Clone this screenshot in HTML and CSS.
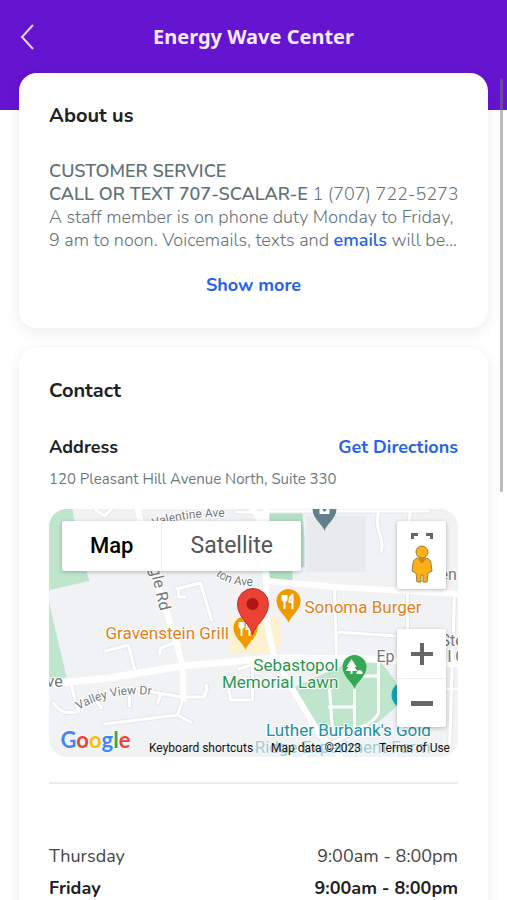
FILE: index.html
```
<!DOCTYPE html>
<html lang="en">
<head>
    <meta charset="UTF-8">
    <meta name="viewport" content="width=device-width, initial-scale=1.0">
    <title>Energy Wave Center</title>
    <link rel="stylesheet" href="styles.css">
</head>
<body>
    <div class="app">
        <header class="topbar">
            <button class="back" type="button" aria-label="Back">
                <svg width="16" height="28" viewBox="0 0 16 28"><path d="M14 2 L3 14 L14 26"/></svg>
            </button>
            <h1>Energy Wave Center</h1>
        </header>

        <main class="content">
            <section class="card">
                <h2>About us</h2>
                <p class="about">
                    <strong>CUSTOMER SERVICE</strong><br>
                    <strong>CALL OR TEXT 707-SCALAR-E</strong> 1 (707) 722-5273<br>
                    A staff member is on phone duty Monday to Friday,<br>
                    9 am to noon. Voicemails, texts and <a href="#emails">emails</a> will be...
                </p>
                <button class="show-more" type="button">Show more</button>
            </section>

            <section class="card">
                <h2>Contact</h2>
                <div class="address-head">
                    <h3>Address</h3>
                    <a href="#directions">Get Directions</a>
                </div>
                <p class="address">120 Pleasant Hill Avenue North, Suite 330</p>

                <div class="map">
                    <svg class="map-canvas" viewBox="0 0 410 248" preserveAspectRatio="xMidYMid slice">
                        <defs>
                            <path id="valentine" d="M105 18 Q140 6 184 8"/>
                            <path id="eagle" d="M97 42 L103 66 L114 112"/>
                            <path id="huntington" d="M167 66 Q182 79 212 76"/>
                            <path id="valley" d="M30 201 Q66 180 110 187"/>
                            <path id="pin" d="M0 22 C-1 16 -12 10 -12 0 A12 12 0 0 1 12 0 C12 10 1 16 0 22 Z"/>
                        </defs>
                        <rect width="410" height="248" fill="#f0f2f4"/>
                        <!-- parks and blocks -->
                        <path fill="#bfe5cd" d="M0 0H24L30 36L41 72L0 81ZM0 91L18 168L0 172Z"/>
                        <path fill="#b3e0c5" d="M216 4H254L256 30V58H244V74H222Z"/>
                        <path fill="#bfe5cd" d="M244 179L286 160L311 150H330L347 172L352 194L330 213L312 220L266 222Z"/>
                        <path fill="#e8eaed" d="M258 7H317V63H258Z"/>
                        <path fill="#fdf1cf" d="M181 108H232V138L224 144H181Z"/>
                        <!-- streets -->
                        <g class="street-edge">
                            <path id="lanes" d="M218 2H380M330 3C326 26 336 25 333 42M128 80L152 74L163 111M130 81V88H137M57 142L80 136L86 160M128 133L112 139L111 145M22 174L30 202Q14 208 5 194M104 183L133 188L155 188Q158 186 158 176M135 188L129 206L56 215M129 206L142 213M47 191L53 199M81 188V197M112 186L109 194M286 79L288 148M288 123L348 127M359 83V120M406 84L401 240M180 178L182 191H204M190 160L204 156V190M382 180H410M254 248L300 226M360 18L362 2M46 0L56 7L63 0M188 3H214V20"/>
                        </g>
                        <g class="street"><use href="#lanes"/>
                            <path d="M281 181L284 222M281 198H306M306 181V220M311 167H329M330 150V204Q326 213 312 218"/>
                        </g>
                        <g class="road">
                            <path d="M89 0L106 66L128 133L134 158L135 190"/>
                            <path d="M218 -2L217 62L219 116L225 146L244 180L271 225L292 248"/>
                            <path d="M218 72L286 78L359 82L410 85"/>
                            <path d="M204 0L218 19"/>
                        </g>
                        <path class="highway" d="M0 175L60 169L134 157L225 149L320 150L410 155"/>

                        <!-- street names -->
                        <g class="street-name">
                            <text><textPath href="#valentine">Valentine Ave</textPath></text>
                            <text class="large"><textPath href="#eagle">Eagle Rd</textPath></text>
                            <text><textPath href="#huntington">ton Ave</textPath></text>
                            <text><textPath href="#valley">Valley View Dr</textPath></text>
                            <text class="large" x="-2" y="178">ve</text>
                            <text class="large" x="391" y="71">en</text>
                            <text class="large" x="392" y="137">Ste</text>
                            <text class="large" x="328" y="153">Ep</text>
                            <text class="large" x="399" y="153">l C</text>
                        </g>

                        <!-- places -->
                        <use href="#pin" x="276" y="0" fill="#64808d"/>
                        <path d="M271 -3L276 3L281 -3V5H271Z" fill="#fff"/>
                        <use href="#pin" x="240" y="92" fill="#f29900"/>
                        <path class="cutlery" d="M234 86v4q0 2 2 2t2-2v-4M236 86v14M244 100V86q-3 1-3 7h3"/>
                        <use href="#pin" x="197" y="119" fill="#f29900"/>
                        <path class="cutlery" d="M191 113v4q0 2 2 2t2-2v-4M193 113v14M201 127V113q-3 1-3 7h3"/>
                        <use href="#pin" x="306" y="158" fill="#34a853"/>
                        <path d="M303 150L308 158H306L309 162H304V165H302V162H297L300 158H298ZM308 165V163Q311 159 314 163V165Z" fill="#fff"/>
                        <circle cx="356" cy="186" r="13" fill="#12a4b8"/>
                        <g class="place food">
                            <text x="256" y="104">Sonoma Burger</text>
                            <text x="57" y="130">Gravenstein Grill</text>
                        </g>
                        <g class="place green">
                            <text x="290" y="162" text-anchor="end">Sebastopol</text>
                            <text x="290" y="179" text-anchor="end">Memorial Lawn</text>
                        </g>
                        <g class="place teal">
                            <text x="300" y="227" text-anchor="middle">Luther Burbank's Gold</text>
                            <text class="faded" x="294" y="244" text-anchor="middle">Ridge Experiment Farm</text>
                        </g>

                        <path d="M204 126C203 116 189 109 189 95A15 15 0 0 1 220 95C220 109 206 116 204 126Z" fill="#ea4335" stroke="#c5302a"/>
                        <circle cx="204" cy="95" r="6" fill="#b31412"/>

                        <text class="google" x="12" y="239"><tspan fill="#4285f4">G</tspan><tspan fill="#ea4335">o</tspan><tspan fill="#fbbc05">o</tspan><tspan fill="#4285f4">g</tspan><tspan fill="#34a853">l</tspan><tspan fill="#ea4335">e</tspan></text>
                    </svg>

                    <div class="map-types">
                        <button class="active" type="button">Map</button>
                        <button type="button">Satellite</button>
                    </div>
                    <div class="map-view">
                        <button class="fullscreen" type="button" aria-label="Full screen">
                            <svg width="22" height="6" viewBox="0 0 22 6"><path d="M0 0H7V3H3V6H0ZM15 0H22V6H19V3H15Z" fill="#666"/></svg>
                        </button>
                        <button class="pegman" type="button" aria-label="Street View">
                            <svg width="22" height="38" viewBox="0 0 22 38">
                                <path d="M7 13Q2 14 2 19L1 26L5 28L6 37H10V30H12V37H16L17 28L21 26L20 19Q20 14 15 13Z" fill="#fbb117" stroke="#a27936"/>
                                <circle cx="11" cy="7" r="6" fill="#fbb117" stroke="#a27936"/>
                                <path d="M7 14H15L11 19Z" fill="#d98212"/>
                            </svg>
                        </button>
                    </div>
                    <div class="map-zoom">
                        <button type="button" aria-label="Zoom in">
                            <svg width="22" height="22" viewBox="0 0 22 22"><path d="M9 0H13V9H22V13H13V22H9V13H0V9H9Z" fill="#666"/></svg>
                        </button>
                        <button type="button" aria-label="Zoom out">
                            <svg width="22" height="22" viewBox="0 0 22 22"><path d="M0 9H22V14H0Z" fill="#666"/></svg>
                        </button>
                    </div>
                    <div class="map-legal">
                        <button type="button">Keyboard shortcuts</button>
                        <span>Map data ©2023</span>
                        <a href="#terms">Terms of Use</a>
                    </div>
                </div>

                <table class="hours">
                    <tr><th scope="row">Thursday</th><td>9:00am - 8:00pm</td></tr>
                    <tr class="today"><th scope="row">Friday</th><td>9:00am - 8:00pm</td></tr>
                </table>
            </section>
        </main>
        <div class="scroll-thumb"></div>
    </div>
</body>
</html>
```
FILE: styles.css
```
* {
    box-sizing: border-box;
}
body {
    margin: 0;
    font-family: Nunito, Lato, sans-serif;
    color: #202124;
}
h1, h2, h3, p {
    margin: 0;
}
button {
    padding: 0;
    border: none;
    background: none;
    font-family: inherit;
    cursor: pointer;
}
a {
    color: #2563eb;
    font-weight: bold;
    text-decoration: none;
}
svg {
    display: block;
}
.app {
    position: relative;
    height: 100vh;
    overflow: hidden;
    background: linear-gradient(#6514d0 110px, #fff 110px);
}
.topbar {
    display: grid;
    grid-template-columns: 24px 1fr 24px;
    align-items: center;
    height: 73px;
    padding: 0 16px;
}
.back svg {
    fill: none;
    stroke: #e6d4fb;
    stroke-width: 2;
    margin-left: 3px;
}
.topbar h1 {
    font-family: "Noto Sans", sans-serif;
    font-size: 20px;
    line-height: 26px;
    text-align: center;
    color: #f6eaff;
}
.content {
    display: flex;
    flex-direction: column;
    gap: 20px;
    padding: 0 19px;
}
.card {
    padding: 29px 30px 27px;
    background: #fff;
    border-radius: 18px;
    box-shadow: 0 4px 16px rgba(30, 30, 60, 0.08);
}
.card h2 {
    margin-bottom: 30px;
    font-size: 20px;
    line-height: 28px;
}
.about {
    font-size: 18px;
    font-weight: 300;
    line-height: 23px;
    color: #667276;
    white-space: nowrap;
}
.about strong {
    font-weight: 600;
    color: #5f7277;
}
.about a {
    font-weight: 600;
}
.show-more {
    display: block;
    margin: 19px auto 2px;
    font-size: 18px;
    font-weight: bold;
    line-height: 28px;
    color: #2563eb;
}
.address-head {
    display: flex;
    justify-content: space-between;
    font-size: 18px;
    line-height: 24px;
}
.address-head h3 {
    font-size: inherit;
}
.address {
    margin: 8px 0 18px;
    font-size: 15px;
    line-height: 24px;
    color: #6d7a7d;
}

/* map */
.map {
    position: relative;
    height: 248px;
    border-radius: 18px;
    overflow: hidden;
    font-family: Roboto, sans-serif;
}
.map-canvas {
    width: 100%;
    height: 100%;
}
.street-edge, .street, .road, .highway {
    fill: none;
    stroke-linecap: round;
    stroke-linejoin: round;
}
.street-edge {
    stroke: #e4e7ea;
    stroke-width: 5;
}
.street {
    stroke: #fff;
    stroke-width: 3;
}
.road {
    stroke: #fff;
    stroke-width: 6;
}
.highway {
    stroke: #fff;
    stroke-width: 7;
}
.street-name, .place {
    stroke: #fff;
    stroke-width: 2;
    paint-order: stroke;
}
.street-name {
    font-size: 12px;
    fill: #74777b;
}
.street-name .large {
    font-size: 16px;
}
.place {
    font-size: 17px;
}
.food {
    fill: #df7e1c;
}
.green {
    fill: #2d9550;
}
.teal {
    fill: #1b8fa3;
}
.faded {
    opacity: 0.4;
}
.cutlery {
    fill: none;
    stroke: #fff;
    stroke-width: 2;
}
.google {
    font-family: Lato, sans-serif;
    font-size: 22px;
    font-weight: bold;
    stroke: #fff;
    stroke-width: 1;
    paint-order: stroke;
}
.map-types, .map-view, .map-zoom {
    position: absolute;
    background: #fff;
    border-radius: 2px;
    box-shadow: 0 1px 4px rgba(0, 0, 0, 0.25);
}
.map-types {
    top: 12px;
    left: 13px;
    display: flex;
}
.map-types button {
    padding: 0 28px;
    font-size: 23px;
    line-height: 50px;
    color: #565656;
}
.map-types .active {
    font-size: 22px;
    font-weight: 500;
    color: #000;
    border-right: 1px solid #eee;
}
.map-view, .map-zoom {
    right: 12px;
    width: 49px;
}
.map-view {
    top: 12px;
}
.map-zoom {
    bottom: 30px;
}
.map-view button, .map-zoom button {
    display: flex;
    justify-content: center;
    align-items: center;
    width: 100%;
}
.map-view .fullscreen {
    height: 18px;
    align-items: flex-end;
}
.map-view .pegman {
    height: 50px;
}
.map-zoom button {
    height: 49px;
}
.map-zoom button + button {
    border-top: 1px solid #eee;
}
.map-legal {
    position: absolute;
    right: 8px;
    bottom: 0;
    display: flex;
    gap: 18px;
    font-size: 12px;
    line-height: 17px;
    color: #111;
}
.map-legal button, .map-legal a {
    font-size: inherit;
    line-height: inherit;
    font-weight: normal;
    color: inherit;
}

.hours {
    width: 100%;
    margin-top: 25px;
    padding-top: 56px;
    border-top: 2px solid #ececec;
    border-spacing: 0;
    font-size: 18px;
    line-height: 32px;
    color: #444;
}
.hours th, .hours td {
    padding: 0;
    font-weight: normal;
    text-align: left;
}
.hours td {
    text-align: right;
}
.hours .today th, .hours .today td {
    font-weight: bold;
    color: #202124;
}
.scroll-thumb {
    position: absolute;
    top: 78px;
    right: 4px;
    width: 3px;
    height: 46%;
    border-radius: 2px;
    background: rgba(120, 120, 120, 0.5);
}
```
